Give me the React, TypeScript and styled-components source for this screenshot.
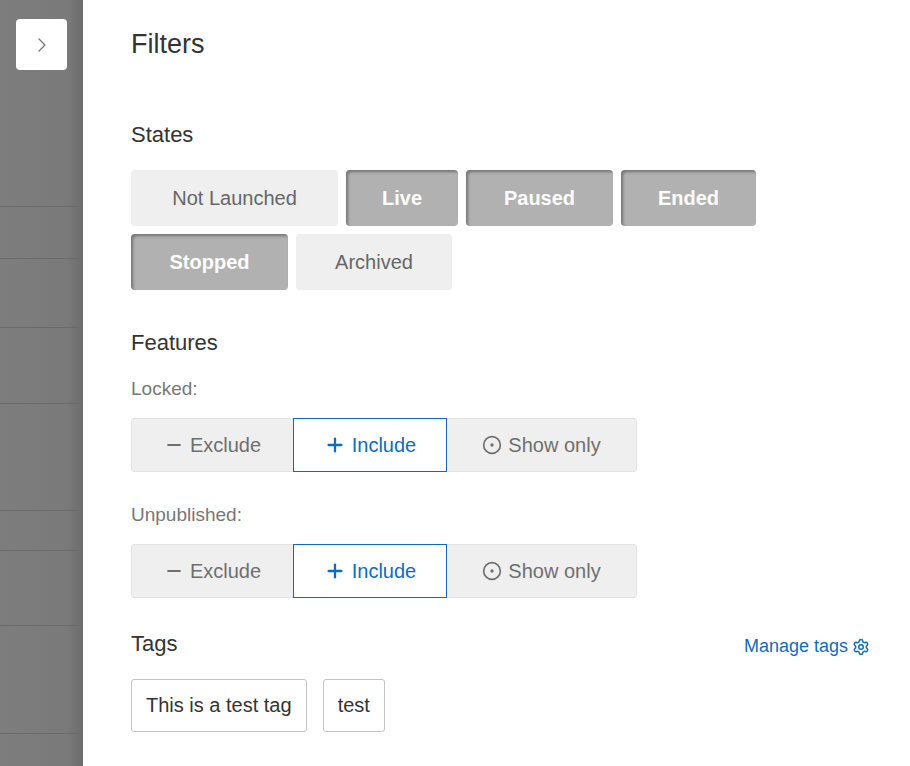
import React from 'react';
import styled, { createGlobalStyle } from 'styled-components';
import { Minus, Plus, CircleDot, Settings, ChevronRight } from 'lucide-react';

const Global = createGlobalStyle`
  html, body { margin: 0; padding: 0; }
  body { font-family: "Liberation Sans", Arial, sans-serif; background: #fff; }
`;

const Page = styled.div`
  display: flex;
  width: 910px;
  height: 766px;
  overflow: hidden;
`;

const Backdrop = styled.div`
  position: relative;
  width: 83px;
  flex-shrink: 0;
  background: linear-gradient(to right, #7d7d7d 0%, #7a7a7a 80%, #6c6c6c 100%);
  display: flex;
  flex-direction: column;
`;

const BackRow = styled.div<{ $h: number }>`
  height: ${p => p.$h}px;
  border-bottom: 1px solid #6a6a6a;
  flex-shrink: 0;
`;

const ToggleButton = styled.div`
  position: absolute;
  top: 19px;
  left: 16px;
  width: 51px;
  height: 51px;
  background: #fff;
  border-radius: 4px;
  display: flex;
  align-items: center;
  justify-content: center;
  color: #777;
`;

const Panel = styled.div`
  flex: 1;
  padding: 28px 40px 0 48px;
  color: #333;
`;

const Title = styled.h1`
  margin: 0 0 62px;
  font-size: 27px;
  font-weight: 400;
  line-height: 32px;
`;

const Heading = styled.h2`
  margin: 0 0 22px;
  font-size: 22px;
  font-weight: 400;
  line-height: 26px;
`;

const StateGrid = styled.div`
  display: flex;
  flex-wrap: wrap;
  gap: 8px 8px;
  width: 640px;
  margin-bottom: 40px;
`;

const StateButton = styled.div<{ $active?: boolean; $w: number }>`
  width: ${p => p.$w}px;
  height: 56px;
  box-sizing: border-box;
  border-radius: 4px;
  display: flex;
  align-items: center;
  justify-content: center;
  font-size: 20px;
  background: ${p => (p.$active ? '#b1b1b1' : '#efefef')};
  color: ${p => (p.$active ? '#fff' : '#666')};
  font-weight: ${p => (p.$active ? 700 : 400)};
  box-shadow: ${p => (p.$active ? 'inset 2px 2px 3px rgba(0,0,0,0.35)' : 'none')};
`;

const Label = styled.div`
  font-size: 19px;
  color: #777;
  line-height: 22px;
  margin: 0 0 18px;
`;

const Segmented = styled.div`
  display: flex;
  width: 506px;
  height: 54px;
  box-sizing: border-box;
  border: 1px solid #e4e4e4;
  border-radius: 3px;
  background: #efefef;
  margin-bottom: 32px;
`;

const Segment = styled.div<{ $active?: boolean; $w: number }>`
  width: ${p => p.$w}px;
  box-sizing: border-box;
  display: flex;
  align-items: center;
  justify-content: center;
  gap: 6px;
  font-size: 20px;
  color: ${p => (p.$active ? '#0f6cbd' : '#6f6f6f')};
  background: ${p => (p.$active ? '#fff' : 'transparent')};
  border: ${p => (p.$active ? '1px solid #0f6cbd' : 'none')};
  margin: ${p => (p.$active ? '-1px 0' : '0')};
`;

const TagsHeader = styled.div`
  display: flex;
  justify-content: space-between;
  align-items: center;
  margin: 10px 0 22px;
`;

const ManageLink = styled.a`
  display: flex;
  align-items: center;
  gap: 4px;
  font-size: 18px;
  color: #0f6cbd;
  text-decoration: none;
  margin-top: 6px;
`;

const TagList = styled.div`
  display: flex;
  gap: 16px;
`;

const Tag = styled.div`
  height: 53px;
  box-sizing: border-box;
  padding: 0 14px;
  border: 1px solid #c4c4c4;
  border-radius: 3px;
  display: flex;
  align-items: center;
  font-size: 20px;
  color: #333;
`;

const states = [
  { name: 'Not Launched', w: 207 },
  { name: 'Live', w: 112, active: true },
  { name: 'Paused', w: 147, active: true },
  { name: 'Ended', w: 135, active: true },
  { name: 'Stopped', w: 157, active: true },
  { name: 'Archived', w: 156 },
];

const TriState = () => (
  <Segmented>
    <Segment $w={161}><Minus size={20} strokeWidth={2.5} />Exclude</Segment>
    <Segment $w={154} $active><Plus size={22} strokeWidth={2.5} />Include</Segment>
    <Segment $w={189}><CircleDot size={20} strokeWidth={2} />Show only</Segment>
  </Segmented>
);

export default function App() {
  return (
    <Page>
      <Global />
      <Backdrop>
        <BackRow $h={206} />
        <BackRow $h={51} />
        <BackRow $h={68} />
        <BackRow $h={75} />
        <BackRow $h={106} />
        <BackRow $h={39} />
        <BackRow $h={74} />
        <BackRow $h={107} />
        <ToggleButton><ChevronRight size={24} strokeWidth={1.3} /></ToggleButton>
      </Backdrop>
      <Panel>
        <Title>Filters</Title>
        <Heading>States</Heading>
        <StateGrid>
          {states.map(s => (
            <StateButton key={s.name} $w={s.w} $active={s.active}>{s.name}</StateButton>
          ))}
        </StateGrid>
        <Heading>Features</Heading>
        <Label>Locked:</Label>
        <TriState />
        <Label>Unpublished:</Label>
        <TriState />
        <TagsHeader>
          <Heading style={{ margin: 0 }}>Tags</Heading>
          <ManageLink>Manage tags <Settings size={18} /></ManageLink>
        </TagsHeader>
        <TagList>
          <Tag>This is a test tag</Tag>
          <Tag>test</Tag>
        </TagList>
      </Panel>
    </Page>
  );
}
